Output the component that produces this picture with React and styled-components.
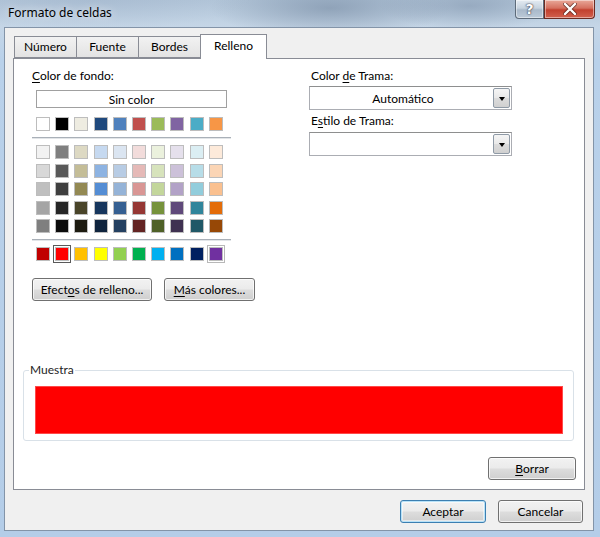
import { createGlobalStyle, styled } from 'styled-components';

const GlobalStyle = createGlobalStyle`
  html, body {
    margin: 0;
    padding: 0;
  }
  body {
    font-family: Lato, "Noto Sans", sans-serif;
    font-size: 12px;
    color: #000;
  }
`;

const THEME = ['#FFFFFF', '#000000', '#EEECE1', '#1F497D', '#4F81BD', '#C0504D', '#9BBB59', '#8064A2', '#4BACC6', '#F79646'];
const TINTS = [
  ['#F2F2F2', '#7F7F7F', '#DDD9C3', '#C6D9F0', '#DBE5F1', '#F2DCDB', '#EBF1DD', '#E5E0EC', '#DBEEF3', '#FDEADA'],
  ['#D8D8D8', '#595959', '#C4BD97', '#8DB3E2', '#B8CCE4', '#E5B9B7', '#D7E3BC', '#CCC1D9', '#B7DDE8', '#FBD5B5'],
  ['#BFBFBF', '#3F3F3F', '#938953', '#548DD4', '#95B3D7', '#D99694', '#C3D69B', '#B2A2C7', '#92CDDC', '#FAC08F'],
  ['#A5A5A5', '#262626', '#494429', '#17365D', '#366092', '#953734', '#76923C', '#5F497A', '#31859B', '#E36C09'],
  ['#7F7F7F', '#0C0C0C', '#1D1B10', '#0F243E', '#244061', '#632423', '#4F6128', '#3F3151', '#205867', '#974806'],
];
const STANDARD = ['#C00000', '#FF0000', '#FFC000', '#FFFF00', '#92D050', '#00B050', '#00B0F0', '#0070C0', '#002060', '#7030A0'];

const Window = styled.div`
  width: 600px;
  height: 537px;
  box-sizing: border-box;
  display: flex;
  flex-direction: column;
  padding: 0 6px 6px 4px;
  background:
    radial-gradient(ellipse 120px 30px at 330px 8px, rgba(110, 130, 155, 0.55), transparent),
    radial-gradient(ellipse 90px 24px at 470px 6px, rgba(120, 140, 165, 0.5), transparent),
    radial-gradient(ellipse 160px 30px at 90px 0px, rgba(150, 170, 195, 0.35), transparent),
    linear-gradient(to bottom, #b3c6d9 0px, #c5d6e7 27px, #b9d1ea 60px, #b4cde8 100%);
`;

const TitleBar = styled.div`
  height: 27px;
  flex-shrink: 0;
  display: flex;
  align-items: flex-start;
  justify-content: space-between;
`;

const Title = styled.div`
  font-family: "Noto Sans", sans-serif;
  font-size: 12px;
  line-height: 16px;
  padding: 5px 0 0 4px;
  color: #000;
  text-shadow: 0 0 8px rgba(255, 255, 255, 0.9);
`;

const CaptionButtons = styled.div`
  display: flex;
  margin-right: -1px;
`;

const CaptionButton = styled.div`
  height: 19px;
  box-sizing: border-box;
  display: flex;
  align-items: center;
  justify-content: center;
  border: 1px solid ${p => (p.$close ? '#6b2b22' : '#5d6b7a')};
  border-top: none;
  width: ${p => (p.$close ? '51px' : '29px')};
  border-radius: ${p => (p.$close ? '0 0 4px 0' : '0 0 0 4px')};
  background: ${p =>
    p.$close
      ? 'linear-gradient(to bottom, #e9a899 0%, #d5705f 45%, #c2402e 55%, #d2614e 100%)'
      : 'linear-gradient(to bottom, #e4ebf2 0%, #c7d3df 45%, #a9b9ca 55%, #bccad8 100%)'};
  box-shadow: inset 0 0 0 1px rgba(255, 255, 255, 0.45);
  color: #fff;
  font-family: "DejaVu Sans", sans-serif;
  font-weight: bold;
  font-size: 14px;
  text-shadow: 0 0 2px #334, 0 0 1px #223;
`;

const Client = styled.div`
  flex: 1;
  min-height: 0;
  display: flex;
  flex-direction: column;
  border: 1px solid #8394a8;
  background: #f0f0f0;
  padding: 6px 8px 0 8px;
`;

const TabStrip = styled.div`
  display: flex;
  flex-shrink: 0;
  align-items: flex-end;
  padding-left: 1px;
  height: 24px;
`;

const Tab = styled.div`
  box-sizing: border-box;
  width: ${p => p.$w}px;
  height: ${p => (p.$active ? '25px' : '22px')};
  margin-bottom: ${p => (p.$active ? '-1px' : '0')};
  margin-right: -1px;
  position: relative;
  z-index: ${p => (p.$active ? 1 : 0)};
  border: 1px solid #898c95;
  border-bottom: ${p => (p.$active ? 'none' : '1px solid #898c95')};
  background: ${p => (p.$active ? '#ffffff' : 'linear-gradient(to bottom, #f2f2f2, #e3e3e3)')};
  display: flex;
  justify-content: center;
  padding-top: ${p => (p.$active ? '3px' : '2px')};
  line-height: 16px;
  color: #000;
`;

const Panel = styled.div`
  flex: 1;
  min-height: 0;
  overflow: hidden;
  display: flex;
  flex-direction: column;
  background: #fff;
  border: 1px solid #898c95;
  padding: 9px 0 0 0;
`;

const TopArea = styled.div`
  display: flex;
  align-items: flex-start;
  flex-shrink: 0;
`;

const LeftCol = styled.div`
  width: 222px;
  margin-left: 18px;
  display: flex;
  flex-direction: column;
`;

const RightCol = styled.div`
  width: 203px;
  margin-left: 55px;
  display: flex;
  flex-direction: column;
`;

const Label = styled.div`
  line-height: 16px;
  margin-top: ${p => p.$mt || 0}px;
  margin-left: ${p => p.$ml || 0}px;
`;

const Key = styled.span`
  text-decoration: underline;
  text-underline-offset: 2px;
`;

const SinColor = styled.div`
  margin: 6px 0 0 4px;
  width: 191px;
  height: 18px;
  box-sizing: border-box;
  border: 1px solid #a0a0a0;
  display: flex;
  align-items: center;
  justify-content: center;
`;

const SwatchGrid = styled.div`
  display: grid;
  grid-template-columns: repeat(10, 14px);
  grid-auto-rows: 14px;
  column-gap: 5.2px;
  row-gap: 4.5px;
  margin: ${p => p.$mt}px 0 0 4px;
`;

const Swatch = styled.div`
  box-sizing: border-box;
  border: 1px solid #bdbdbd;
  background: ${p => p.$c};
  box-shadow: ${p =>
    p.$selected
      ? '0 0 0 1px #ffffff, 0 0 0 2px #5a5a5a'
      : p.$hover
        ? '0 0 0 1px #ffffff, 0 0 0 2px #b8b8b8'
        : 'none'};
`;

const Separator = styled.div`
  margin-top: 6px;
  width: 199px;
  height: 1px;
  border-bottom: 1px solid #e2e5e8;
  background: #a9b0b8;
`;

const ButtonRow = styled.div`
  display: flex;
  gap: 12px;
  margin-top: 17px;
`;

const Button = styled.div`
  box-sizing: border-box;
  flex-shrink: 0;
  width: ${p => p.$w}px;
  height: 23px;
  border: 1px solid ${p => (p.$default ? '#3c7fb1' : '#707070')};
  border-radius: 3px;
  background: linear-gradient(to bottom, #f2f2f2 0%, #ebebeb 49%, #dddddd 51%, #cfcfcf 100%);
  box-shadow: ${p =>
    p.$default ? 'inset 0 0 0 1px #b8e2f8, inset 0 0 0 2px rgba(255,255,255,0.5)' : 'inset 0 0 0 1px rgba(255,255,255,0.7)'};
  display: flex;
  align-items: center;
  justify-content: center;
  line-height: 16px;
  color: #000;
`;

const Combo = styled.div`
  margin-top: ${p => p.$mt}px;
  height: 24px;
  box-sizing: border-box;
  border: 1px solid #abadb3;
  border-top-color: #8e8f8f;
  background: #fff;
  display: flex;
  align-items: stretch;
  padding: 1px;
`;

const ComboText = styled.div`
  flex: 1;
  display: flex;
  align-items: center;
  justify-content: center;
  padding-left: 2px;
`;

const DropButton = styled.div`
  width: 17px;
  box-sizing: border-box;
  border: 1px solid #8f9aa6;
  border-radius: 2px;
  background: linear-gradient(to bottom, #f5f5f5 0%, #e9e9e9 49%, #dcdcdc 51%, #d0d0d0 100%);
  display: flex;
  align-items: center;
  justify-content: center;
`;

const Arrow = styled.div`
  width: 0;
  height: 0;
  border-left: 3.5px solid transparent;
  border-right: 3.5px solid transparent;
  border-top: 4px solid #000;
  margin-top: 1px;
`;

const Group = styled.fieldset`
  flex-shrink: 0;
  margin: 61px 10px 0 9px;
  padding: 8px 10px 6px 11px;
  border: 1px solid #d9e1e8;
  border-radius: 3px;
  min-width: 0;
`;

const Legend = styled.legend`
  margin-left: -6px;
  padding: 0 1px;
  line-height: 16px;
  color: #1e1e1e;
`;

const Sample = styled.div`
  height: 48px;
  background: #ff0000;
  box-shadow: inset 0 0 0 1px #ff4a4a;
`;

const RightAligned = styled.div`
  display: flex;
  flex-shrink: 0;
  justify-content: flex-end;
  margin: 16px 8px 0 0;
`;

const Footer = styled.div`
  display: flex;
  flex-shrink: 0;
  justify-content: flex-end;
  gap: 12px;
  padding: 10px 2px 7px 0;
`;

function ComboBox({ mt, value }) {
  return (
    <Combo $mt={mt}>
      <ComboText>{value}</ComboText>
      <DropButton>
        <Arrow />
      </DropButton>
    </Combo>
  );
}

function CloseGlyph() {
  return (
    <svg width="14" height="12" viewBox="0 0 14 12">
      <path d="M2 1 L12 11 M12 1 L2 11" stroke="#3a1a16" strokeWidth="4" strokeLinecap="round" opacity="0.6" />
      <path d="M2 1 L12 11 M12 1 L2 11" stroke="#ffffff" strokeWidth="2.4" strokeLinecap="round" />
    </svg>
  );
}

export default function App() {
  return (
    <>
      <GlobalStyle />
      <Window>
        <TitleBar>
          <Title>Formato de celdas</Title>
          <CaptionButtons>
            <CaptionButton>?</CaptionButton>
            <CaptionButton $close>
              <CloseGlyph />
            </CaptionButton>
          </CaptionButtons>
        </TitleBar>
        <Client>
          <TabStrip>
            <Tab $w={63}>Número</Tab>
            <Tab $w={63}>Fuente</Tab>
            <Tab $w={63}>Bordes</Tab>
            <Tab $w={67} $active>Relleno</Tab>
          </TabStrip>
          <Panel>
            <TopArea>
              <LeftCol>
                <Label><Key>C</Key>olor de fondo:</Label>
                <SinColor>Sin color</SinColor>
                <SwatchGrid $mt={9}>
                  {THEME.map(c => <Swatch key={c} $c={c} />)}
                </SwatchGrid>
                <Separator />
                <SwatchGrid $mt={6}>
                  {TINTS.flat().map((c, i) => <Swatch key={i} $c={c} />)}
                </SwatchGrid>
                <Separator />
                <SwatchGrid $mt={6}>
                  {STANDARD.map((c, i) => (
                    <Swatch key={c} $c={c} $selected={i === 1} $hover={i === 9} />
                  ))}
                </SwatchGrid>
                <ButtonRow>
                  <Button $w={120}>Efect<Key>o</Key>s de relleno...</Button>
                  <Button $w={91}><Key>M</Key>ás colores...</Button>
                </ButtonRow>
              </LeftCol>
              <RightCol>
                <Label $ml={2}>Color <Key>d</Key>e Trama:</Label>
                <ComboBox mt={2} value="Automático" />
                <Label $mt={3} $ml={2}>E<Key>s</Key>tilo de Trama:</Label>
                <ComboBox mt={3} value="" />
              </RightCol>
            </TopArea>
            <Group>
              <Legend>Muestra</Legend>
              <Sample />
            </Group>
            <RightAligned>
              <Button $w={88}><Key>B</Key>orrar</Button>
            </RightAligned>
          </Panel>
          <Footer>
            <Button $w={86} $default>Aceptar</Button>
            <Button $w={85}>Cancelar</Button>
          </Footer>
        </Client>
      </Window>
    </>
  );
}
